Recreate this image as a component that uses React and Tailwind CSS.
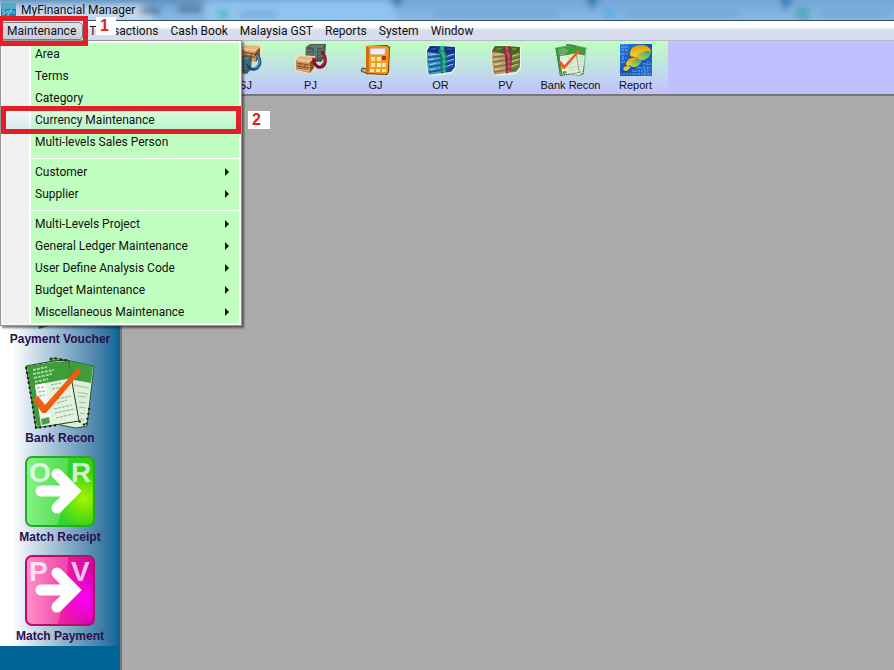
const menus = [
  "Transactions",
  "Cash Book",
  "Malaysia GST",
  "Reports",
  "System",
  "Window",
];

const menuGroups = [
  [
    { label: "Area" },
    { label: "Terms" },
    { label: "Category" },
    { label: "Currency Maintenance", active: true },
    { label: "Multi-levels Sales Person" },
  ],
  [
    { label: "Customer", sub: true },
    { label: "Supplier", sub: true },
  ],
  [
    { label: "Multi-Levels Project", sub: true },
    { label: "General Ledger Maintenance", sub: true },
    { label: "User Define Analysis Code", sub: true },
    { label: "Budget Maintenance", sub: true },
    { label: "Miscellaneous Maintenance", sub: true },
  ],
];

function Crate({ x, y }) {
  return (
    <g transform={`translate(${x} ${y})`}>
      <path d="M0 4L4 0L20 1L20 14L15 19L0 16Z" fill="#f6dfbd" />
      <path d="M1 4L5 1L19 2L15 6Z" fill="#e3b77b" />
      <path d="M1 5L15 7L15 18L1 15Z" fill="#c98b50" />
      <path d="M15 7L19 3L19 13L15 18Z" fill="#8f5226" />
      <path
        d="M2 8L14 10M2 11L14 13M5 9V11M10 10V13M3 13L12 15"
        stroke="#8a4e28"
        fill="none"
      />
      <path d="M2 6L14 8M2 14L14 16" stroke="#ecc08a" fill="none" />
    </g>
  );
}

function Cash({ x, y }) {
  return (
    <g transform={`translate(${x} ${y})`}>
      <path d="M1 3L5 0L21 0L20 13L16 18L0 16Z" fill="#4c5a52" />
      <path d="M2 3L6 1L19 1L17 4Z" fill="#6a7c70" />
      <path d="M10 1H14L12 4L12 17H9L9 4Z" fill="#56807e" />
      <path
        d="M1 6L8 7M1 9L8 10M1 12L8 13M13 7L19 5M13 10L19 8M13 13L18 11"
        stroke="#758677"
      />
    </g>
  );
}

function SalesIcon() {
  return (
    <svg width="32" height="32" viewBox="0 0 32 32" aria-hidden="true">
      <Crate x={11} y={0} />
      <Cash x={1} y={12} />
      <path
        d="M25 10C32 14 31 23 25 25C21 26 18 24 17 20"
        fill="none"
        stroke="#164c79"
        strokeWidth="3"
      />
      <path
        d="M26 11C31 14 30 22 25 24"
        fill="none"
        stroke="#3b8fcc"
        strokeWidth="2"
      />
      <path d="M14 21L16 15L22 18Z" fill="#256fa9" />
    </svg>
  );
}

function PurchaseIcon() {
  return (
    <svg width="32" height="32" viewBox="0 0 32 32" aria-hidden="true">
      <Cash x={10} y={0} />
      <Crate x={0} y={11} />
      <path
        d="M27 8C32 14 31 22 26 23C23 24 20 21 19 18"
        fill="none"
        stroke="#7d0d26"
        strokeWidth="3"
      />
      <path
        d="M28 10C31 15 30 20 26 22"
        fill="none"
        stroke="#b8203c"
        strokeWidth="2"
      />
      <path d="M16 19L18 13L24 17Z" fill="#a9122e" />
    </svg>
  );
}

function CalculatorIcon() {
  return (
    <svg width="32" height="32" viewBox="0 0 32 32" aria-hidden="true">
      <path
        d="M8 25L2 24L1 27L8 30"
        fill="#a9aaa0"
        stroke="#4a4b45"
        strokeWidth="1"
      />
      <path d="M6 2L27 1L30 3L29 28L27 31L6 30Z" fill="#6d3600" />
      <path d="M6 2L27 2L29 4L28 28L26 30L6 29Z" fill="#f39c1b" />
      <path d="M6 2L9 3L9 28L6 29Z" fill="#d06c0c" />
      <path d="M10 4H26L25 11H10Z" fill="#eeeeea" stroke="#b49c78" />
      <path
        d="M11 13H15V17H11ZM17 13H21V17H17ZM11 19H15V23H11ZM17 19H21V23H17ZM22 19H26V23H22ZM10 25H14V28H10ZM16 25H20V28H16ZM22 25H26V28H22Z"
        fill="#ffe9b5"
      />
      <path d="M22 12H26V16H22Z" fill="#e01b08" />
    </svg>
  );
}

function NotesIcon({ dark, body, light, edge, band, bandDark }) {
  return (
    <svg width="32" height="32" viewBox="0 0 32 32" aria-hidden="true">
      <path d="M1 6L4 1L31 2L31 24L26 30L4 32L2 28Z" fill="#eaf9ef" />
      <path d="M2 7L5 2L30 3L30 23L26 28L4 30L3 27Z" fill={body} />
      <path d="M2 7L5 2L30 3L29 8L17 11Z" fill={dark} />
      <path d="M2 8L17 10L17 29L4 31L3 25Z" fill={edge} />
      <path
        d="M3 13L16 12M3 18L16 16M4 23L16 21M4 28L16 26"
        stroke={body}
        strokeWidth="2"
      />
      <path
        d="M4 11L11 10M4 16L9 15M5 21L11 19M5 26L10 25M20 13L29 10M20 18L29 15M20 23L28 20"
        stroke={light}
        strokeWidth="1"
      />
      <path
        d="M20 11L30 8M20 16L30 13M20 21L30 18M20 27L28 24"
        stroke={dark}
        strokeWidth="1"
      />
      <path d="M7 4L12 4L10 6L6 6ZM22 4L27 4L26 6L22 6Z" fill={body} />
      <path
        d="M15 2H20V7L22 11L21 27L16 30L15 11L13 7Z"
        fill={bandDark}
      />
      <path
        d="M17 2V8L19 12V28"
        fill="none"
        stroke={band}
        strokeWidth="3"
      />
      <path d="M17 15H21M17 20H21M17 25H21M15 7H20" stroke={bandDark} />
    </svg>
  );
}

function ReportIcon() {
  return (
    <svg width="32" height="32" viewBox="0 0 32 32" aria-hidden="true">
      <defs>
        <linearGradient id="report-bg" x1="0" y1="0" x2="1" y2="1">
          <stop offset="0" stopColor="#2d7fdc" />
          <stop offset="0.5" stopColor="#1450b4" />
          <stop offset="1" stopColor="#2a70d0" />
        </linearGradient>
        <linearGradient id="report-gold" x1="0" y1="0" x2="0" y2="1">
          <stop offset="0" stopColor="#e29a08" />
          <stop offset="1" stopColor="#fbd523" />
        </linearGradient>
        <linearGradient id="report-leaf" x1="0" y1="1" x2="1" y2="0">
          <stop offset="0" stopColor="#c5dd35" />
          <stop offset="1" stopColor="#3fa08c" />
        </linearGradient>
      </defs>
      <rect width="32" height="32" fill="url(#report-bg)" />
      <path
        d="M1 3H8M2 6H7M0 10H7M2 14H6M1 18H5M0 30H31M12 27H28M17 24H30M23 20H31"
        stroke="#5fabf0"
        strokeDasharray="2 1"
      />
      <path
        d="M3 0V20M7 0V10M14 27V32M19 23V32M24 19V32M28 17V32"
        stroke="#6cb4f2"
        strokeDasharray="1 2"
      />
      <path
        d="M10 10C10 3 16 1 22 1C28 1 31 5 31 8C25 6 21 9 18 13C13 13 10 13 10 10Z"
        fill="url(#report-gold)"
      />
      <path
        d="M16 13C20 8 26 6 31 8C30 16 20 19 16 13Z"
        fill="url(#report-leaf)"
      />
      <path
        d="M6 20C7 13 15 12 21 15C15 15 13 18 11 21C8 22 6 22 6 20Z"
        fill="url(#report-gold)"
      />
      <path
        d="M10 21C13 16 17 15 22 16C20 23 13 25 10 21Z"
        fill="url(#report-leaf)"
      />
      <path d="M3 25C4 22 8 21 11 23C9 24 9 27 5 27Z" fill="#e3c923" />
    </svg>
  );
}

function BankReconIcon({ size }) {
  return (
    <svg
      width={size}
      height={size}
      viewBox="0 0 72 72"
      className="shrink-0"
      aria-hidden="true"
    >
      <path
        d="M26 2L29 1L46 4L70 9L63 69L52 71L36 68Z"
        fill="#dcefd8"
        stroke="#1f5a28"
        strokeWidth="1"
      />
      <path d="M27 2L46 4L69 9L67 26L45 22L29 20Z" fill="#3f9c3b" />
      <path
        d="M50 28L65 31M53 35L64 37M54 39L62 40M55 45L62 46M55 50L62 51M56 56L61 57M56 62L60 63"
        stroke="#a3bda0"
      />
      <path
        d="M2 9L30 4L44 3L55 64L12 71L8 45Z"
        fill="#e0f1dc"
        stroke="#1f3a22"
        strokeWidth="1"
      />
      <path d="M3 9L30 5L44 4L48 21L11 28L17 69L13 70L8 45Z" fill="#3f9c3b" />
      <path d="M11 28L21 26L27 65L18 68Z" fill="#f6faf3" />
      <path
        d="M9 13L23 10M9 17L30 13M10 21L28 17M11 25L24 22"
        stroke="#a6d7a0"
        strokeWidth="2"
        strokeDasharray="3 1"
      />
      <path
        d="M13 31L20 30M14 35L21 34M15 39L21 38M17 53L24 52M27 28L37 26M28 32L44 29M33 42L47 39M33 46L43 43M30 52L48 48M31 56L50 52M32 61L49 57"
        stroke="#94a591"
        strokeDasharray="3 1"
      />
      <path d="M17 62L25 60L26 66L18 68Z" fill="#4c9b4b" />
      <path
        d="M2 10L8 45L12 71L34 68M55 64L62 69L66 48M26 2L29 1L46 4"
        fill="none"
        stroke="#111c13"
        strokeWidth="2"
        strokeDasharray="2 3"
      />
      <path
        d="M9 42L14 39L21 48L54 11L57 15L22 56L18 56Z"
        fill="#f25c12"
      />
    </svg>
  );
}

function MatchIcon({ id, left, right, from, mid, to, glow, edge }) {
  return (
    <svg width="72" height="72" viewBox="0 0 72 72" aria-hidden="true">
      <defs>
        <linearGradient id={id} x1="0" y1="0" x2="1" y2="0">
          <stop offset="0" stopColor={from} />
          <stop offset="0.5" stopColor={mid} />
          <stop offset="1" stopColor={to} />
        </linearGradient>
        <radialGradient id={`${id}-glow`}>
          <stop offset="0" stopColor={glow} />
          <stop offset="1" stopColor={glow} stopOpacity="0" />
        </radialGradient>
        <clipPath id={`${id}-clip`}>
          <rect x="2" y="1" width="68" height="69" rx="6" />
        </clipPath>
      </defs>
      <rect
        x="2"
        y="1"
        width="68"
        height="69"
        rx="6"
        fill={`url(#${id})`}
      />
      <g clipPath={`url(#${id}-clip)`}>
        <circle cx="60" cy="43" r="29" fill={`url(#${id}-glow)`} />
        <path d="M2 1H44Q44 40 33 70H2Z" fill="#ffffff" opacity="0.2" />
      </g>
      <rect
        x="2"
        y="1"
        width="68"
        height="69"
        rx="6"
        fill="none"
        stroke={edge}
        strokeWidth="2"
      />
      <g
        fill="#ffffff"
        fillOpacity="0.75"
        fontFamily="Liberation Sans, sans-serif"
        fontSize="28"
        fontWeight="bold"
      >
        <text x="5" y="26">
          {left}
        </text>
        <text x="47" y="26">
          {right}
        </text>
      </g>
      <path
        d="M17 35H46M33 18L50 35L33 52"
        fill="none"
        stroke="#ffffff"
        strokeWidth="11"
        strokeLinecap="round"
      />
    </svg>
  );
}

function VoucherIcon() {
  return (
    <svg width="72" height="72" viewBox="0 0 72 72" aria-hidden="true">
      <path d="M4 12L60 4L69 53L15 71Z" fill="#495f37" />
      <path d="M7 15L58 8L65 50L17 66Z" fill="#b9c592" />
    </svg>
  );
}

const tools = [
  { label: "SJ", icon: <SalesIcon /> },
  { label: "PJ", icon: <PurchaseIcon /> },
  { label: "GJ", icon: <CalculatorIcon /> },
  {
    label: "OR",
    icon: (
      <NotesIcon
        dark="#1c2a8c"
        body="#2450a8"
        light="#8fd3e4"
        edge="#45a4b4"
        band="#35b987"
        bandDark="#137665"
      />
    ),
  },
  {
    label: "PV",
    icon: (
      <NotesIcon
        dark="#4a6424"
        body="#75853a"
        light="#e0c4a0"
        edge="#d09a80"
        band="#c25262"
        bandDark="#84283a"
      />
    ),
  },
  { label: "Bank Recon", icon: <BankReconIcon size={32} /> },
  { label: "Report", icon: <ReportIcon /> },
];

const shortcuts = [
  { label: "Payment Voucher", icon: <VoucherIcon /> },
  { label: "Bank Recon", icon: <BankReconIcon size={72} /> },
  {
    label: "Match Receipt",
    icon: (
      <MatchIcon
        id="receipt"
        left="O"
        right="R"
        from="#67ef67"
        mid="#2fd82f"
        to="#33cb10"
        glow="#a5f500"
        edge="#20ae20"
      />
    ),
  },
  {
    label: "Match Payment",
    icon: (
      <MatchIcon
        id="payment"
        left="P"
        right="V"
        from="#ff76ba"
        mid="#ee249b"
        to="#d000a9"
        glow="#ff00f5"
        edge="#b80d69"
      />
    ),
  },
];

function TitleBar() {
  return (
    <header className="relative flex h-[21px] items-center overflow-hidden border-b border-[#34556f] bg-linear-to-b from-[#73a7d8] to-[#8bb7e3] pl-px">
      <svg
        className="absolute inset-0 h-full w-full"
        viewBox="0 0 894 20"
        preserveAspectRatio="none"
        aria-hidden="true"
      >
        <defs>
          <filter id="soft" x="-5%" y="-50%" width="110%" height="200%">
            <feGaussianBlur stdDeviation="3" />
          </filter>
        </defs>
        <g filter="url(#soft)">
          <path d="M-10 5H145L155 24H-10Z" fill="#c2d8ed" />
          <path d="M205 2H390L400 24H205Z" fill="#91c3ef" />
          <path d="M0 -4H205V3H0Z" fill="#5c8eb9" />
          <path
            d="M390 -4H405L396 8ZM585 -4H600L592 10ZM778 -4H794L786 10Z"
            fill="#3d79b1"
          />
          <path d="M140 8H160V14H140ZM178 6H202V12H178Z" fill="#52789d" />
          <path
            d="M240 14H278M435 14H557M625 14H739M820 14H890"
            stroke="#6f9fcd"
            strokeWidth="4"
          />
          <circle cx="223" cy="14" r="5" fill="#48b8bb" />
          <circle cx="610" cy="13" r="6" fill="#5eace8" />
          <circle cx="803" cy="13" r="7" fill="#53a8bd" />
        </g>
      </svg>
      <svg
        className="relative"
        width="15"
        height="15"
        viewBox="0 0 15 15"
        aria-hidden="true"
      >
        <rect width="15" height="15" fill="#1982b4" />
        <rect width="15" height="6" fill="#54a9cc" />
        <path
          d="M4 7H2V9H4V11H1M6 7V10H8V7M8 10V12H6M10 6V11M9 8H12M13 8V11"
          fill="none"
          stroke="#8fd0e2"
        />
      </svg>
      <h1 className="relative ml-[5px] text-xs font-normal">
        MyFinancial Manager
      </h1>
    </header>
  );
}

function MaintenanceMenu() {
  return (
    <div
      role="menu"
      aria-label="Maintenance"
      className="absolute top-[19px] left-0 z-10 w-[242px] border border-[#979797] bg-[#f5f5f5] p-[2px] shadow-[2px_2px_2px_rgba(0,0,0,0.5)]"
    >
      <div className="bg-[linear-gradient(to_right,#f0f0f0_26px,#ffffff_26px,#ffffff_28px,#c0ffc0_28px)]">
        {menuGroups.map((group, index) => (
          <div key={index}>
            {index > 0 && (
              <div className="h-2 pt-[5px] pl-7">
                <div className="h-px bg-white" />
              </div>
            )}
            {group.map((item) => (
              <button
                key={item.label}
                type="button"
                role="menuitem"
                className={
                  item.active
                    ? "relative flex h-[22px] w-full items-center bg-linear-to-b from-white/40 to-[#a8dcec]/35 pl-8 text-left"
                    : "relative flex h-[22px] w-full items-center pl-8 text-left"
                }
              >
                <span>{item.label}</span>
                {item.sub && (
                  <svg
                    className="mr-[10px] ml-auto"
                    width="4"
                    height="8"
                    viewBox="0 0 4 8"
                    aria-hidden="true"
                  >
                    <path d="M0 0L4 4L0 8Z" fill="#111111" />
                  </svg>
                )}
                {item.active && (
                  <>
                    <span className="pointer-events-none absolute -inset-x-[2px] -inset-y-[3px] z-10 border-[5px] border-[#df2027]" />
                    <span className="absolute left-[245px] z-10 flex h-[18px] w-[22px] items-center bg-white pl-1 font-['Liberation_Sans',sans-serif] text-base font-bold text-[#df2027]">
                      2
                    </span>
                  </>
                )}
              </button>
            ))}
          </div>
        ))}
      </div>
    </div>
  );
}

function MenuBar() {
  return (
    <nav className="relative flex h-5 items-center border-b border-[#b5bac8] bg-linear-to-b from-white from-30% to-[#d8dded] to-50%">
      <button
        type="button"
        className="h-[18px] rounded-sm border border-[#777b85] bg-linear-to-b from-[#e0e2eb] to-[#c9ccda] px-1.5"
      >
        Maintenance
      </button>
      {menus.map((menu) => (
        <button key={menu} type="button" className="h-[18px] px-1.5">
          {menu}
        </button>
      ))}
      <MaintenanceMenu />
      <span className="pointer-events-none absolute -top-[5px] -left-0.5 z-20 h-[30px] w-[90px] border-[5px] border-[#df2027]" />
      <span className="absolute -top-1 left-24 z-20 flex h-[18px] w-5 items-center bg-white pl-1 font-['Liberation_Sans',sans-serif] text-base font-bold text-[#df2027]">
        1
      </span>
    </nav>
  );
}

function ToolBar() {
  return (
    <div className="flex border-b-2 border-[#777777] bg-[#c0c0ff]">
      <div className="flex bg-linear-to-b from-[#c0ffc0] to-[#c0c0ff] pl-[213px]">
        {tools.map((tool) => (
          <button
            key={tool.label}
            type="button"
            className="flex h-[53px] w-[65px] flex-col items-center pt-[3px] font-['Liberation_Sans',sans-serif] text-[11px] leading-[18px] whitespace-nowrap"
          >
            {tool.icon}
            {tool.label}
          </button>
        ))}
      </div>
    </div>
  );
}

function SideBar() {
  return (
    <aside className="w-[122px] shrink-0 border-r-2 border-[#777777] bg-[#006496]">
      <div className="flex flex-col gap-[9px] bg-linear-to-r from-white from-10% to-[#006496] pt-[162px] pb-px">
        {shortcuts.map((item) => (
          <button
            key={item.label}
            type="button"
            className="flex flex-col items-center font-['Liberation_Sans',sans-serif] text-xs leading-[18px] font-bold text-[#28104f]"
          >
            {item.icon}
            {item.label}
          </button>
        ))}
      </div>
    </aside>
  );
}

export default function App() {
  return (
    <div className="flex min-h-screen flex-col bg-[#ababab] font-[Roboto,'Open_Sans',sans-serif] text-xs text-[#111111]">
      <TitleBar />
      <MenuBar />
      <ToolBar />
      <div className="flex grow">
        <SideBar />
        <main className="grow" />
      </div>
    </div>
  );
}
